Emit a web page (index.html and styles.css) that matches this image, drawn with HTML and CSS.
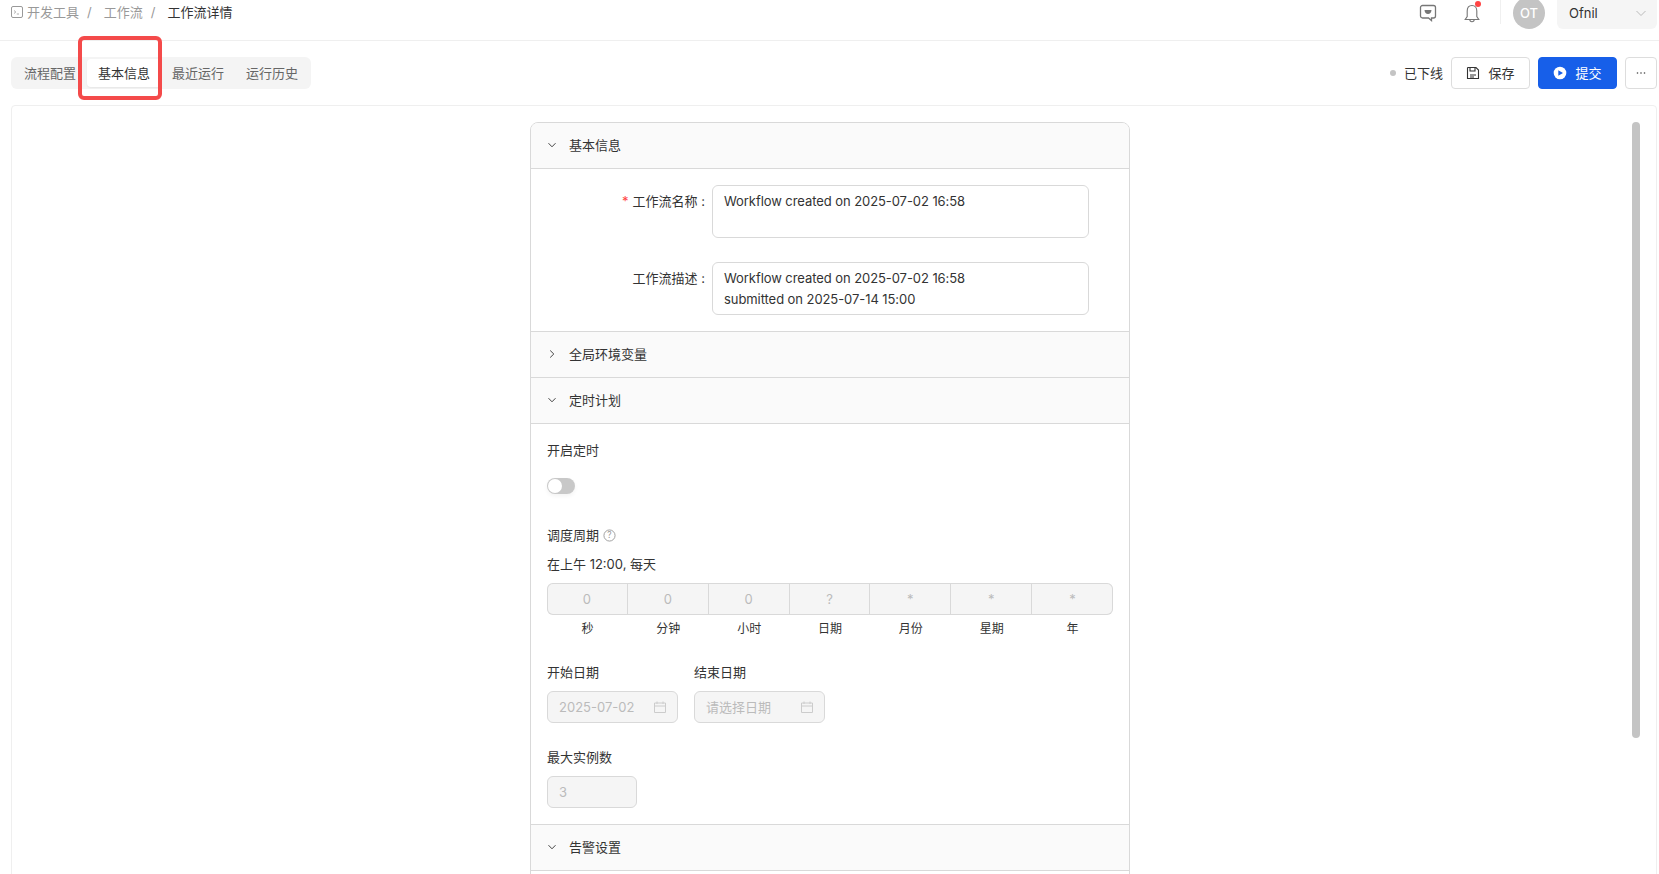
FILE: index.html
```html
<!DOCTYPE html>
<html lang="zh">
<head>
<meta charset="utf-8">
<title>工作流详情</title>
<link rel="stylesheet" href="styles.css">
</head>
<body>
<div class="app">
  <header class="topbar">
    <nav class="crumbs">
      <svg class="ico-term" viewBox="0 0 12 12" width="12" height="12"><rect x="0.5" y="0.5" width="11" height="11" rx="1.5" fill="none" stroke="#999"/><path d="M3 4.5 L4.8 6 L3 7.5 M5.8 8 H8" fill="none" stroke="#999" stroke-width=".8"/></svg>
      <span class="crumb">开发工具</span><span class="sep">/</span>
      <span class="crumb">工作流</span><span class="sep">/</span>
      <span class="crumb current">工作流详情</span>
    </nav>
    <div class="top-actions">
      <svg class="ico-msg" viewBox="0 0 18 18" width="18" height="18"><path d="M3.5 1.5 H14.5 A2 2 0 0 1 16.5 3.5 V12 A2 2 0 0 1 14.5 14 H12.5 V16.5 L9.5 14 H3.5 A2 2 0 0 1 1.5 12 V3.5 A2 2 0 0 1 3.5 1.5 Z" fill="none" stroke="#777" stroke-width="1.3"/><path d="M5.5 6 H12.5 C12.3 8.6 11 10 9 10 C7 10 5.7 8.6 5.5 6 Z" fill="#777"/></svg>
      <span class="bell">
        <svg viewBox="0 0 16 20" width="16" height="20"><path d="M8 1.5 C4.8 1.5 3.2 4 3.2 7 V12.5 L1.2 15.5 H14.8 L12.8 12.5 V7 C12.8 4 11.2 1.5 8 1.5 Z M5.8 15.5 C5.8 18.4 10.2 18.4 10.2 15.5" fill="none" stroke="#777" stroke-width="1.1"/></svg>
        <i class="bell-dot"></i>
      </span>
      <span class="vline"></span>
      <span class="avatar">OT</span>
      <div class="user-select"><span>Ofnil</span>
        <svg viewBox="0 0 12 12" width="12" height="12"><path d="M1.5 4 L6 8.5 L10.5 4" fill="none" stroke="#bbb" stroke-width="1"/></svg>
      </div>
    </div>
  </header>

  <div class="toolbar">
    <div class="tabs">
      <span class="tab">流程配置</span>
      <span class="tab active">基本信息</span>
      <span class="tab">最近运行</span>
      <span class="tab">运行历史</span>
    </div>
    <div class="tools">
      <span class="status"><i class="status-dot"></i>已下线</span>
      <button class="btn">
        <svg viewBox="0 0 14 14" width="14" height="14"><path d="M2 1.5 H10 L12.5 4 V12.5 H1.5 V2 Z M4 1.5 V5 H9 V1.5 M4 9 H10 M4 11 H8" fill="none" stroke="#333" stroke-width="1.1"/></svg>
        保存
      </button>
      <button class="btn primary">
        <svg viewBox="0 0 14 14" width="14" height="14"><circle cx="7" cy="7" r="6.3" fill="#fff"/><path d="M5.3 4.2 L10 7 L5.3 9.8 Z" fill="#175fe9"/></svg>
        提交
      </button>
      <button class="btn more">
        <svg viewBox="0 0 10 4" width="10" height="4"><circle cx="1.5" cy="2" r=".8" fill="#444"/><circle cx="5" cy="2" r=".8" fill="#444"/><circle cx="8.5" cy="2" r=".8" fill="#444"/></svg>
      </button>
    </div>
  </div>

  <main class="card">
    <section class="panel">
      <div class="sec-head">
        <svg class="chev" viewBox="0 0 10 10" width="10" height="10"><path d="M1.5 3.2 L5 6.8 L8.5 3.2" fill="none" stroke="#444" stroke-width="1"/></svg>
        基本信息
      </div>
      <div class="sec-body basic">
        <div class="form-row">
          <label class="row-label"><em>*</em>工作流名称 :</label>
          <div class="textarea">Workflow created on 2025-07-02 16:58</div>
        </div>
        <div class="form-row">
          <label class="row-label">工作流描述 :</label>
          <div class="textarea">Workflow created on 2025-07-02 16:58<br>submitted on 2025-07-14 15:00</div>
        </div>
      </div>
      <div class="sec-head">
        <svg class="chev" viewBox="0 0 10 10" width="10" height="10"><path d="M3.2 1.5 L6.8 5 L3.2 8.5" fill="none" stroke="#444" stroke-width="1"/></svg>
        全局环境变量
      </div>
      <div class="sec-head">
        <svg class="chev" viewBox="0 0 10 10" width="10" height="10"><path d="M1.5 3.2 L5 6.8 L8.5 3.2" fill="none" stroke="#444" stroke-width="1"/></svg>
        定时计划
      </div>
      <div class="sec-body schedule">
        <div class="field-label">开启定时</div>
        <div class="switch"><i></i></div>
        <div class="field-label cycle">调度周期
          <svg viewBox="0 0 14 14" width="13" height="13"><circle cx="7" cy="7" r="6" fill="none" stroke="#999"/><text x="7" y="10" text-anchor="middle" class="help-q">?</text></svg>
        </div>
        <div class="cron-text">在上午 12:00, 每天</div>
        <div class="cron">
          <span>0</span><span>0</span><span>0</span><span>?</span><span>*</span><span>*</span><span>*</span>
        </div>
        <div class="cron-labels">
          <span>秒</span><span>分钟</span><span>小时</span><span>日期</span><span>月份</span><span>星期</span><span>年</span>
        </div>
        <div class="dates">
          <div>
            <div class="field-label">开始日期</div>
            <div class="date-input"><span>2025-07-02</span>
              <svg viewBox="0 0 12 12" width="12" height="12"><path d="M.5 2 H11.5 V11.5 H.5 Z M.5 5 H11.5 M3 .5 V3 M9 .5 V3" fill="none" stroke="#ccc"/></svg>
            </div>
          </div>
          <div>
            <div class="field-label">结束日期</div>
            <div class="date-input"><span>请选择日期</span>
              <svg viewBox="0 0 12 12" width="12" height="12"><path d="M.5 2 H11.5 V11.5 H.5 Z M.5 5 H11.5 M3 .5 V3 M9 .5 V3" fill="none" stroke="#ccc"/></svg>
            </div>
          </div>
        </div>
        <div class="field-label max-label">最大实例数</div>
        <div class="num-input">3</div>
      </div>
      <div class="sec-head">
        <svg class="chev" viewBox="0 0 10 10" width="10" height="10"><path d="M1.5 3.2 L5 6.8 L8.5 3.2" fill="none" stroke="#444" stroke-width="1"/></svg>
        告警设置
      </div>
      <div class="sec-body tail"></div>
    </section>
    <div class="scroll-thumb"></div>
  </main>
  <div class="highlight"></div>
</div>
</body>
</html>
```
FILE: styles.css
```css
* { box-sizing: border-box; }
html, body { margin: 0; height: 100%; overflow: hidden; background: #fff; }
body {
  font-family: Inter, "Noto Sans CJK SC", sans-serif;
  font-size: 13px;
  line-height: 20px;
  color: #333;
}
.app { position: relative; width: 1659px; height: 874px; overflow: hidden; display: flex; flex-direction: column; }

.topbar {
  height: 41px;
  flex: none;
  border-bottom: 1px solid #efefef;
  display: flex;
  justify-content: space-between;
  padding: 2px 2px 0 11px;
}
.crumbs { display: flex; align-items: flex-start; height: 20px; color: #999; }
.ico-term { margin: 4px 4px 0 0; }
.sep { margin: 0 12px 0 8px; }
.crumb.current { color: #333; }
.top-actions { display: flex; align-items: flex-start; margin-top: -2px; height: 30px; }
.ico-msg { margin: 4px 0 0 0; }
.bell { position: relative; margin: 4px 0 0 27px; height: 20px; }
.bell-dot { position: absolute; width: 6px; height: 6px; border-radius: 50%; background: #f44; left: 11px; top: -3px; }
.vline { width: 1px; height: 24px; background: #f0f0f0; margin-left: 20px; }
.avatar {
  width: 32px; height: 32px; margin: -3px 0 0 12px; border-radius: 50%;
  background: #c4c4c4; color: #fff; font-weight: 500; font-size: 13px;
  display: flex; align-items: center; justify-content: center;
}
.user-select {
  width: 100px; height: 29px; margin: 0 0 0 12px; padding: 0 10px 3px 12px;
  background: #f5f5f5; border-radius: 0 0 6px 6px;
  display: flex; align-items: center; justify-content: space-between; color: #333;
}

.toolbar {
  flex: none;
  height: 32px;
  margin-top: 16px;
  padding: 0 2px 0 11px;
  display: flex;
  justify-content: space-between;
}
.tabs { display: flex; align-items: center; background: #f4f4f4; border-radius: 6px; height: 32px; padding: 0 2px; width: 300px; }
.tab { width: 74px; height: 28px; display: flex; align-items: center; justify-content: center; color: #666; }
.tab.active { background: #fff; color: #333; border-radius: 4px; box-shadow: 0 1px 2px rgba(0,0,0,.06); }
.tools { display: flex; align-items: center; gap: 8px; }
.status { display: flex; align-items: center; color: #333; }
.status-dot { width: 6px; height: 6px; border-radius: 50%; background: #c4c4c4; margin-right: 8px; }
.btn {
  height: 32px; width: 79px; border: 1px solid #ddd; border-radius: 4px; background: #fff;
  font: inherit; color: #333; display: flex; align-items: center; justify-content: center; gap: 8px; padding: 0;
}
.btn.primary { background: #175fe9; border-color: #175fe9; color: #fff; }
.btn.more { width: 32px; }

.card {
  position: relative;
  flex: 1;
  min-height: 0;
  margin: 16px 2px -10px 11px;
  border: 1px solid #efefef;
  border-radius: 4px 4px 0 0;
  padding-top: 16px;
  overflow: hidden;
}
.panel {
  width: 600px;
  margin-left: 518px;
  border: 1px solid #d9d9d9;
  border-radius: 8px 8px 0 0;
  overflow: hidden;
}
.sec-head {
  height: 46px;
  background: #fafafa;
  border-bottom: 1px solid #d9d9d9;
  display: flex;
  align-items: center;
  padding: 0 0 1px 16px;
  color: #333;
}
.chev { margin-right: 12px; margin-left: 0; }
.sec-body { border-bottom: 1px solid #d9d9d9; }
.basic { padding: 16px 0; }
.form-row { display: flex; margin-bottom: 24px; }
.form-row:last-child { margin-bottom: 0; }
.row-label { width: 181px; padding: 6px 7px 0 0; text-align: right; color: #333; white-space: nowrap; }
.row-label em { color: #f44; font-style: normal; margin-right: 4px; }
.textarea {
  width: 377px; height: 53px; margin-left: 0; padding: 5px 11px;
  border: 1px solid #d9d9d9; border-radius: 6px; color: #333; line-height: 21px; letter-spacing: -0.07px;
}
.schedule { padding: 16px; }
.field-label { color: #333; height: 20px; }
.switch {
  width: 28px; height: 16px; margin-top: 18px; border-radius: 8px; background: #c8c8c8; position: relative;
  box-shadow: 0 2px 4px rgba(0,0,0,.05);
}
.switch i { position: absolute; left: 1px; top: 1px; width: 14px; height: 14px; border-radius: 50%; background: #fff; }
.cycle { margin-top: 31px; display: flex; align-items: center; gap: 4px; }
.help-q { font-size: 9px; fill: #999; }
.cron-text { margin-top: 9px; color: #333; }
.cron {
  display: grid; grid-template-columns: repeat(7, 1fr); height: 32px; margin-top: 9px;
  box-shadow: inset 0 0 0 1px #d9d9d9; border-radius: 6px; background: #f5f5f5; overflow: hidden;
}
.cron span { display: flex; align-items: center; justify-content: center; color: #bbb; border-right: 1px solid #d9d9d9; }
.cron span:last-child { border-right: 0; }
.cron-labels { display: grid; grid-template-columns: repeat(7, 1fr); margin-top: 4px; font-size: 12px; text-align: center; color: #333; }
.dates { display: flex; gap: 16px; margin-top: 23px; }
.date-input {
  width: 131px; height: 32px; margin-top: 9px; padding: 0 11px;
  border: 1px solid #d9d9d9; border-radius: 6px; background: #f5f5f5; color: #bbb;
  display: flex; align-items: center; justify-content: space-between;
}
.max-label { margin-top: 24px; }
.num-input {
  width: 90px; height: 32px; margin-top: 9px; padding: 0 11px;
  border: 1px solid #d9d9d9; border-radius: 6px; background: #f5f5f5; color: #bbb;
  display: flex; align-items: center;
}
.tail { height: 60px; }

.scroll-thumb { position: absolute; left: 1620px; top: 16px; width: 8px; height: 616px; border-radius: 4px; background: #c4c4c4; }
.highlight { position: absolute; left: 78px; top: 36px; width: 84px; height: 64px; border: 4px solid #f44a4a; border-radius: 6px; }
```
